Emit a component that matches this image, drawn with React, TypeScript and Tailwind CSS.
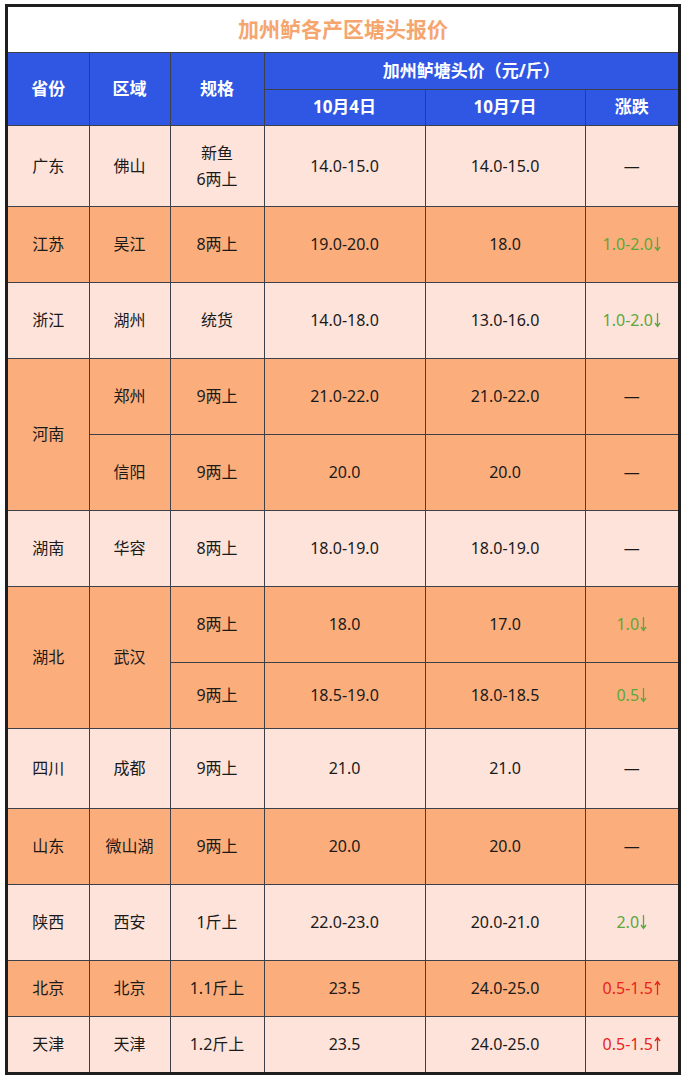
import React from 'react'

type Row = {
  prov?: string
  provSpan?: number
  area?: string
  areaSpan?: number
  spec: React.ReactNode
  d1: string
  d2: string
  chg: string
  dir?: 'up' | 'down'
  h: string
  dark: boolean
}

const rows: Row[] = [
  { prov: '广东', area: '佛山', spec: <>新鱼<br />6两上</>, d1: '14.0-15.0', d2: '14.0-15.0', chg: '—', h: 'h-[81px]', dark: false },
  { prov: '江苏', area: '吴江', spec: '8两上', d1: '19.0-20.0', d2: '18.0', chg: '1.0-2.0', dir: 'down', h: 'h-[76px]', dark: true },
  { prov: '浙江', area: '湖州', spec: '统货', d1: '14.0-18.0', d2: '13.0-16.0', chg: '1.0-2.0', dir: 'down', h: 'h-[76px]', dark: false },
  { prov: '河南', provSpan: 2, area: '郑州', spec: '9两上', d1: '21.0-22.0', d2: '21.0-22.0', chg: '—', h: 'h-[76px]', dark: true },
  { area: '信阳', spec: '9两上', d1: '20.0', d2: '20.0', chg: '—', h: 'h-[76px]', dark: true },
  { prov: '湖南', area: '华容', spec: '8两上', d1: '18.0-19.0', d2: '18.0-19.0', chg: '—', h: 'h-[76px]', dark: false },
  { prov: '湖北', provSpan: 2, area: '武汉', areaSpan: 2, spec: '8两上', d1: '18.0', d2: '17.0', chg: '1.0', dir: 'down', h: 'h-[76px]', dark: true },
  { spec: '9两上', d1: '18.5-19.0', d2: '18.0-18.5', chg: '0.5', dir: 'down', h: 'h-[66px]', dark: true },
  { prov: '四川', area: '成都', spec: '9两上', d1: '21.0', d2: '21.0', chg: '—', h: 'h-[80px]', dark: false },
  { prov: '山东', area: '微山湖', spec: '9两上', d1: '20.0', d2: '20.0', chg: '—', h: 'h-[76px]', dark: true },
  { prov: '陕西', area: '西安', spec: '1斤上', d1: '22.0-23.0', d2: '20.0-21.0', chg: '2.0', dir: 'down', h: 'h-[76px]', dark: false },
  { prov: '北京', area: '北京', spec: '1.1斤上', d1: '23.5', d2: '24.0-25.0', chg: '0.5-1.5', dir: 'up', h: 'h-[56px]', dark: true },
  { prov: '天津', area: '天津', spec: '1.2斤上', d1: '23.5', d2: '24.0-25.0', chg: '0.5-1.5', dir: 'up', h: 'h-[56px]', dark: false },
]

const cell = 'border border-[#3d4048] text-center align-middle p-0'

// thin narrow arrow like the YaHei glyph
const Arrow = ({ up }: { up?: boolean }) => (
  <svg width="7" height="16" viewBox="0 0 7 16" className="inline-block align-[-2px] ml-[1px]">
    {up ? (
      <path d="M3.5 15V2M1 5l2.5-3.5L6 5" stroke="currentColor" strokeWidth="1.3" fill="none" />
    ) : (
      <path d="M3.5 1v13M1 11l2.5 3.5L6 11" stroke="currentColor" strokeWidth="1.3" fill="none" />
    )}
  </svg>
)

export default function App() {
  return (
    <div className="bg-white w-[687px] h-[1081px] pt-[4px] pl-[5px] font-['Noto_Sans','Noto_Sans_CJK_SC',sans-serif]">
      <div className="w-[676px] border-[3px] border-[#1e1e1e] bg-white">
        <div className="h-[46px] flex items-center justify-center border-b border-[#3d4048] text-[21px] font-bold text-[#f5a66e]">
          加州鲈各产区塘头报价
        </div>
        <table className="w-[670px] table-fixed border-collapse border-hidden text-[16px] text-[#1a1a1a] leading-[26px]">
          <colgroup>
            <col className="w-[81px]" />
            <col className="w-[81px]" />
            <col className="w-[94px]" />
            <col className="w-[161px]" />
            <col className="w-[160px]" />
            <col className="w-[93px]" />
          </colgroup>
          <thead className="bg-[#3057e3] text-white font-bold text-[17px]">
            <tr className="h-[36px]">
              <th rowSpan={2} className={cell}>省份</th>
              <th rowSpan={2} className={cell}>区域</th>
              <th rowSpan={2} className={cell}>规格</th>
              <th colSpan={3} className={cell}>加州鲈塘头价（元/斤）</th>
            </tr>
            <tr className="h-[36px]">
              <th className={cell}>10月4日</th>
              <th className={cell}>10月7日</th>
              <th className={cell}>涨跌</th>
            </tr>
          </thead>
          <tbody>
            {rows.map((r, i) => (
              <tr key={i} className={`${r.h} ${r.dark ? 'bg-[#fbae7c]' : 'bg-[#fde3da]'}`}>
                {r.prov && <td rowSpan={r.provSpan} className={cell}>{r.prov}</td>}
                {r.area && <td rowSpan={r.areaSpan} className={cell}>{r.area}</td>}
                <td className={cell}>{r.spec}</td>
                <td className={cell}>{r.d1}</td>
                <td className={cell}>{r.d2}</td>
                <td
                  className={`${cell} ${
                    r.dir === 'down' ? 'text-[#5aa83c]' : r.dir === 'up' ? 'text-[#e8231d]' : 'text-[#1a1a1a]'
                  }`}
                >
                  {r.chg}
                  {r.dir && <Arrow up={r.dir === 'up'} />}
                </td>
              </tr>
            ))}
          </tbody>
        </table>
      </div>
    </div>
  )
}
